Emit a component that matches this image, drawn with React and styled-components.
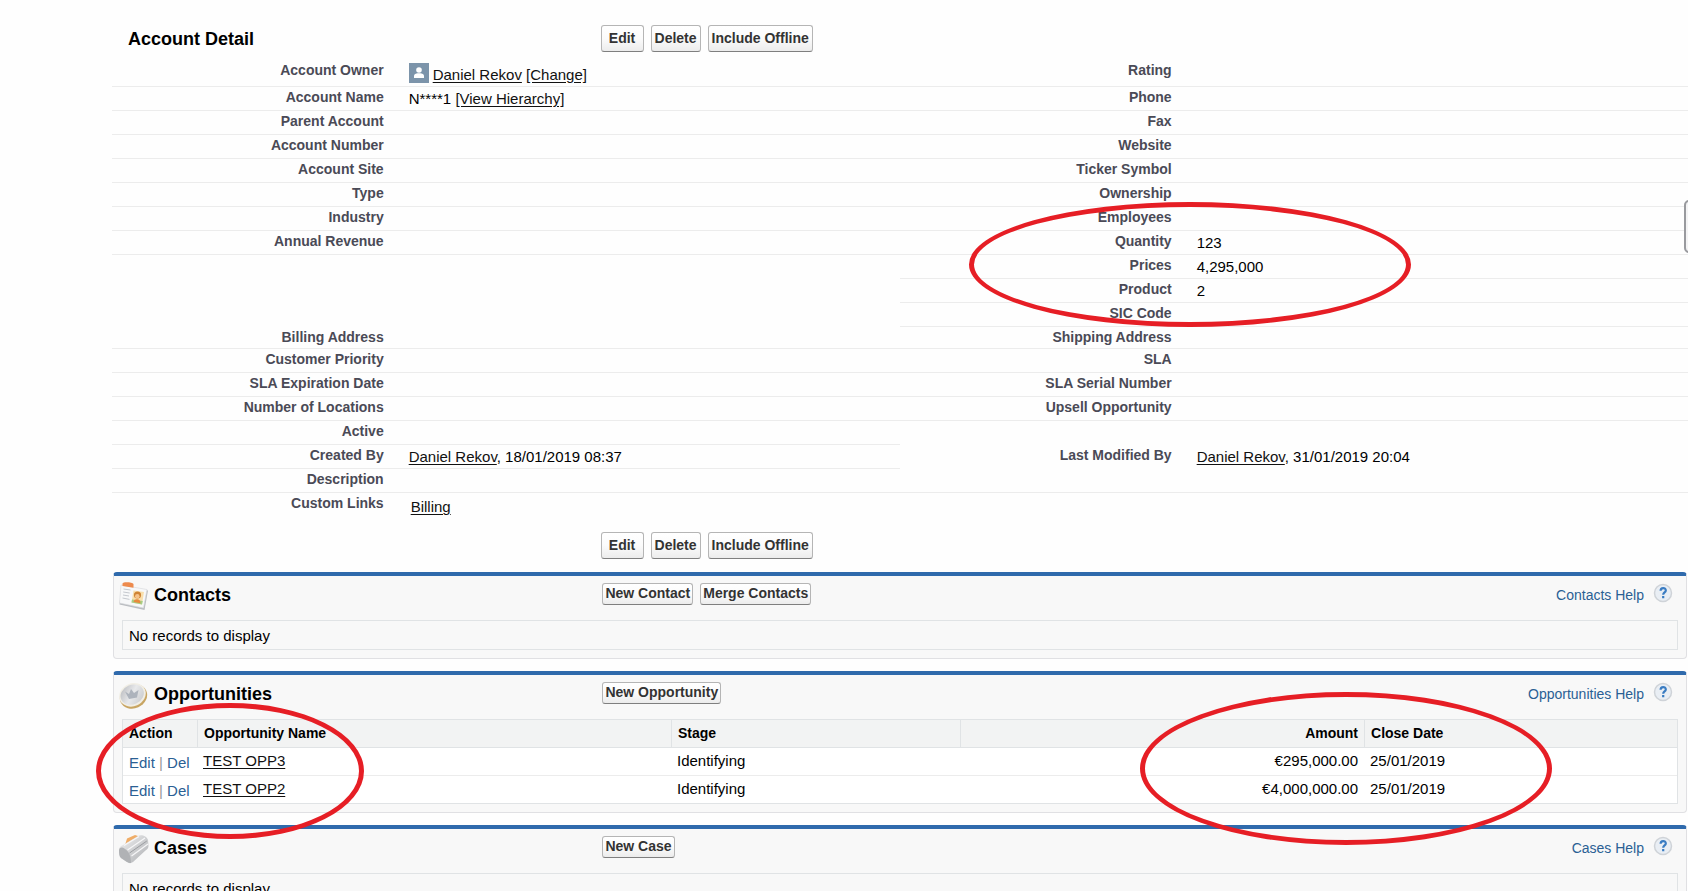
import React from 'react';
import styled, { createGlobalStyle } from 'styled-components';

const GlobalStyle = createGlobalStyle`
  * { box-sizing: border-box; }
  body {
    margin: 0;
    background: #fefefe;
    color: #000;
    font: 15px/20px "Liberation Sans", Arial, sans-serif;
  }
`;

const Page = styled.div`
  position: relative;
  height: 100vh;
  overflow-x: hidden;
  overflow-y: auto;
  scrollbar-width: none;
  padding: 25px 0 0 112px;
`;

const Title = styled.h2`
  margin: 0;
  font-size: 18px;
  line-height: 24px;
`;

const DetailBar = styled.div`
  display: grid;
  grid-template-columns: 31% 1fr;
  align-items: center;
  ${Title} { padding-left: 16px; }
`;

const ButtonGroup = styled.div`
  grid-column: 2;
  display: flex;
  gap: 7px;
`;

const Button = styled.button`
  height: ${(p) => (p.$small ? 22 : 27)}px;
  min-width: 43px;
  padding: ${(p) => (p.$small ? '0 2px 2px' : '0 3px 2px')};
  border: 1px solid #b5b5b5;
  border-bottom-color: #7f7f7f;
  border-radius: 3px;
  background: linear-gradient(#fff, #fbfbfb 50%, #ececec);
  color: #333;
  font: bold 14px/18px "Liberation Sans", Arial, sans-serif;
  white-space: nowrap;
`;

const FieldTable = styled.table`
  width: 100%;
  margin: 8px 0 12px;
  border-spacing: 0;
  table-layout: fixed;
`;

const cellBorder = (p) => (p.$plain ? 'transparent' : '#ececec');

const FieldLabel = styled.th`
  width: 18%;
  height: ${(p) => p.$height || 24}px;
  padding: 0 12px 0 0;
  border-bottom: 1px solid ${cellBorder};
  color: #4a4a56;
  font-size: 14px;
  line-height: 20px;
  text-align: right;
  vertical-align: top;
`;

const FieldValue = styled.td`
  width: 32%;
  padding: ${(p) => p.$top || 2}px 0 0 13px;
  border-bottom: 1px solid ${cellBorder};
  vertical-align: top;
  white-space: nowrap;
`;

const Link = styled.a`
  color: #111;
  text-decoration: underline;
  text-underline-offset: 2px;
`;

const Owner = styled.span`
  display: flex;
  gap: 4px;
`;

const OwnerText = styled.span`
  padding-top: 2px;
`;

const Indent = styled.span`
  padding-left: 2px;
`;

const Panel = styled.section`
  margin: 12px 1px 0;
  padding: 0 8px 8px;
  border: 1px solid #e0e0e3;
  border-top: 4px solid #2f6aac;
  border-radius: 4px;
  background: #f8f8f8;
`;

const PanelStack = styled.div`
  padding-top: 1px;
`;

const PanelHead = styled.div`
  display: grid;
  grid-template-columns: 30.9% 1fr auto;
  align-items: start;
  height: 44px;
  margin: 0 -1px;
  padding-top: 7px;
`;

const PanelName = styled.div`
  display: flex;
  align-items: flex-start;
  gap: 4px;
  margin-left: -3px;
  svg { flex: none; margin-top: -3px; }
`;

const HelpLink = styled.a`
  grid-column: 3;
  display: flex;
  align-items: flex-start;
  gap: 9px;
  padding-right: 6px;
  color: #2a6094;
  font-size: 14px;
  text-decoration: none;
  span { padding-top: 2px; }
`;

const EmptyList = styled.div`
  height: 30px;
  padding: 5px 6px;
  border: 1px solid #e0e3e5;
`;

const ListTable = styled.table`
  width: 100%;
  table-layout: fixed;
  border: 1px solid #e0e3e5;
  border-spacing: 0;
  background: #fff;
`;

const HeadCell = styled.th`
  width: ${(p) => p.$width || 'auto'};
  height: 28px;
  padding: 0 6px 2px;
  border-bottom: 1px solid #e0e3e5;
  border-left: ${(p) => (p.$first ? 0 : 1)}px solid #e0e3e5;
  background: #f2f3f3;
  font-size: 14px;
  text-align: ${(p) => (p.$right ? 'right' : 'left')};
`;

const Cell = styled.td`
  height: ${(p) => (p.$last ? 27 : 28)}px;
  padding: 0 6px 2px;
  border-bottom: ${(p) => (p.$last ? 0 : 1)}px solid #ececec;
  text-align: ${(p) => (p.$right ? 'right' : 'left')};
  white-space: nowrap;
`;

const Actions = styled.div`
  padding-top: 4px;
  color: #999;
  a { color: #2a6094; text-decoration: none; }
`;

const Ring = styled.div`
  position: absolute;
  left: ${(p) => p.$x}px;
  top: ${(p) => p.$y}px;
  width: ${(p) => p.$w}px;
  height: ${(p) => p.$h}px;
  border: 5px solid #e61e25;
  border-radius: 50%;
  pointer-events: none;
`;

const SideHandle = styled.div`
  position: absolute;
  right: -6px;
  top: 200px;
  width: 10px;
  height: 53px;
  border: 2px solid #999a9e;
  border-radius: 5px;
  background: #f4f4f5;
`;

const UserIcon = () => (
  <svg width="20" height="20" viewBox="0 0 20 20" aria-hidden="true">
    <rect width="20" height="20" fill="#7c94aa" />
    <circle cx="10" cy="7" r="2.8" fill="#fff" />
    <path d="M5 15v-2.2c0-1.6 2-2.4 3.6-2.6h2.8c1.6.2 3.6 1 3.6 2.6V15z" fill="#fff" />
  </svg>
);

const ContactsIcon = () => (
  <svg width="32" height="32" viewBox="0 0 32 32" aria-hidden="true">
    <path d="M3.5 6 30 10.5 26.5 30 1.5 24.5z" fill="#b9bcc0" />
    <path d="M3 5 29 9.500 25.500 28 1.500 23z" fill="#f7f8f9" stroke="#d5d7da" strokeWidth=".6" />
    <path d="M4.500 3.500C5 1.500 14.500 2 15.500 4v3.800L4.500 6z" fill="#ed8a4d" />
    <path d="M5.500 9l7 1M5.200 12l6.500 1M5 15l6 1M4.500 18l7 1.400" stroke="#c4c8ce" />
    <path d="M15.500 10.500 26 12l-2 12.500-10.500-2z" fill="#f8dfad" />
    <path d="M14 19.500l10.800 1.500-.8 3.500-10.500-2z" fill="#a5cf86" />
    <circle cx="19.500" cy="15" r="3.600" fill="#cf8435" />
    <circle cx="19.300" cy="16.200" r="2.300" fill="#f6c38a" />
    <path d="M15.500 22c.5-2.500 2-3 3.800-2.800s3.200 1.300 3.200 4z" fill="#e9893c" />
  </svg>
);

const OpportunityIcon = () => (
  <svg width="32" height="32" viewBox="0 0 32 32" aria-hidden="true">
    <defs>
      <linearGradient id="coin" x1="0" y1="0" x2="1" y2="1">
        <stop offset="0" stopColor="#b4b6ba" />
        <stop offset=".5" stopColor="#e8e9eb" />
        <stop offset="1" stopColor="#c3c5c8" />
      </linearGradient>
    </defs>
    <ellipse cx="15.500" cy="17.500" rx="14" ry="11.800" fill="#c8a562" transform="rotate(-24 15.500 17.500)" />
    <ellipse cx="14.500" cy="15.800" rx="13.600" ry="11.400" fill="#f1eee5" transform="rotate(-24 14.500 15.800)" />
    <ellipse cx="14.200" cy="15.600" rx="12" ry="9.800" fill="url(#coin)" transform="rotate(-24 14.200 15.600)" />
    <path d="M7 12.500l4 2.500 2-5 3 4 4.500-3-1.500 7.500-8 1.500z" fill="#adb3bc" />
  </svg>
);

const CaseIcon = () => (
  <svg width="32" height="32" viewBox="0 0 32 32" aria-hidden="true">
    <defs>
      <linearGradient id="case" x1="0" y1="0" x2="1" y2="1">
        <stop offset="0" stopColor="#f4f4f5" />
        <stop offset=".5" stopColor="#cfd0d2" />
        <stop offset="1" stopColor="#aeb0b3" />
      </linearGradient>
    </defs>
    <path d="M7 12 9 5.500 17 2l6 2-6 8z" fill="#f0ad68" />
    <path d="M1 17C1 14 3 13 5 12L20 3c3-2 9 0 10 4l.5 6c0 2-1 3-3 4.500L15 29c-2 1.500-4 1.500-6 0l-6-4c-2-1.500-2-5-2-8z" fill="url(#case)" />
    <path d="M1 17c1-3 3-3 6-1 4 2.500 6 7 6 14-1.500 0-3-.5-4-1l-6-4c-2-1.500-2-5-2-8z" fill="#b0b2b5" />
    <path d="M6 12.500 21 3.500M9.500 17 27 5M13.500 23 30 11" stroke="#f7f7f8" strokeWidth="1.200" fill="none" />
    <path d="M11.500 20 28.800 8" stroke="#9b9da1" fill="none" />
  </svg>
);

const HelpIcon = () => (
  <svg width="20" height="20" viewBox="0 0 20 20" aria-hidden="true">
    <circle cx="10" cy="10" r="8.500" fill="#e9eef4" stroke="#cfd3d8" strokeWidth="1.500" />
    <path d="M7.600 7.800c0-3.500 5.200-3.500 5.200-.4 0 2-2.600 2-2.600 4.300M10.200 13v2.200" stroke="#3a7cc2" strokeWidth="2.200" fill="none" />
  </svg>
);

const person = (rest) => (<><Link href="#user">Daniel Rekov</Link>{rest}</>);

const fields = [
  {
    left: 'Account Owner', right: 'Rating', height: 27, top: 3,
    value: (
      <Owner>
        <UserIcon />
        <OwnerText>{person(' ')}<Link href="#change">[Change]</Link></OwnerText>
      </Owner>
    ),
  },
  { left: 'Account Name', right: 'Phone', value: <>N****1 <Link href="#hierarchy">[View Hierarchy]</Link></> },
  { left: 'Parent Account', right: 'Fax' },
  { left: 'Account Number', right: 'Website' },
  { left: 'Account Site', right: 'Ticker Symbol' },
  { left: 'Type', right: 'Ownership' },
  { left: 'Industry', right: 'Employees' },
  { left: 'Annual Revenue', right: 'Quantity', rightValue: '123' },
  { right: 'Prices', rightValue: '4,295,000', leftPlain: true },
  { right: 'Product', rightValue: '2', leftPlain: true },
  { right: 'SIC Code', leftPlain: true },
  { left: 'Billing Address', right: 'Shipping Address', height: 22 },
  { left: 'Customer Priority', right: 'SLA' },
  { left: 'SLA Expiration Date', right: 'SLA Serial Number' },
  { left: 'Number of Locations', right: 'Upsell Opportunity' },
  { left: 'Active', rightPlain: true },
  {
    left: 'Created By', value: person(', 18/01/2019 08:37'),
    right: 'Last Modified By', rightValue: person(', 31/01/2019 20:04'), rightPlain: true,
  },
  { left: 'Description' },
  {
    left: 'Custom Links', value: <Indent><Link href="#billing">Billing</Link></Indent>,
    height: 27, top: 4, leftPlain: true, rightPlain: true,
  },
];

const opportunities = [
  { name: 'TEST OPP3', amount: '€295,000.00' },
  { name: 'TEST OPP2', amount: '€4,000,000.00' },
];

const RecordButtons = () => (
  <ButtonGroup>
    <Button type="button">Edit</Button>
    <Button type="button">Delete</Button>
    <Button type="button">Include Offline</Button>
  </ButtonGroup>
);

function RelatedList({ title, icon, buttons, children }) {
  return (
    <Panel>
      <PanelHead>
        <PanelName>{icon}<Title as="h3">{title}</Title></PanelName>
        <ButtonGroup>
          {buttons.map((b) => <Button $small type="button" key={b}>{b}</Button>)}
        </ButtonGroup>
        <HelpLink href="#help"><span>{title} Help</span><HelpIcon /></HelpLink>
      </PanelHead>
      {children}
    </Panel>
  );
}

export default function App() {
  return (
    <Page>
      <GlobalStyle />
      <DetailBar>
        <Title>Account Detail</Title>
        <RecordButtons />
      </DetailBar>
      <FieldTable>
        <tbody>
          {fields.map((f, i) => (
            <tr key={i}>
              <FieldLabel scope="row" $height={f.height} $plain={f.leftPlain}>{f.left}</FieldLabel>
              <FieldValue $top={f.top} $plain={f.leftPlain}>{f.value}</FieldValue>
              <FieldLabel scope="row" $height={f.height} $plain={f.rightPlain}>{f.right}</FieldLabel>
              <FieldValue $plain={f.rightPlain}>{f.rightValue}</FieldValue>
            </tr>
          ))}
        </tbody>
      </FieldTable>
      <DetailBar><RecordButtons /></DetailBar>

      <PanelStack>
        <RelatedList title="Contacts" icon={<ContactsIcon />} buttons={['New Contact', 'Merge Contacts']}>
          <EmptyList>No records to display</EmptyList>
        </RelatedList>
        <RelatedList title="Opportunities" icon={<OpportunityIcon />} buttons={['New Opportunity']}>
          <ListTable>
            <thead>
              <tr>
                <HeadCell $first $width="74px">Action</HeadCell>
                <HeadCell $width="30.5%">Opportunity Name</HeadCell>
                <HeadCell $width="18.6%">Stage</HeadCell>
                <HeadCell $width="26%" $right>Amount</HeadCell>
                <HeadCell>Close Date</HeadCell>
              </tr>
            </thead>
            <tbody>
              {opportunities.map((o, i) => {
                const last = i === opportunities.length - 1;
                return (
                  <tr key={o.name}>
                    <Cell $last={last}><Actions><a href="#edit">Edit</a> | <a href="#del">Del</a></Actions></Cell>
                    <Cell $last={last}><Link href="#opportunity">{o.name}</Link></Cell>
                    <Cell $last={last}>Identifying</Cell>
                    <Cell $last={last} $right>{o.amount}</Cell>
                    <Cell $last={last}>25/01/2019</Cell>
                  </tr>
                );
              })}
            </tbody>
          </ListTable>
        </RelatedList>
        <RelatedList title="Cases" icon={<CaseIcon />} buttons={['New Case']}>
          <EmptyList>No records to display</EmptyList>
        </RelatedList>
      </PanelStack>

      <SideHandle />
      <Ring $x={969} $y={202} $w={442} $h={125} />
      <Ring $x={96} $y={703} $w={268} $h={136} />
      <Ring $x={1140} $y={692} $w={412} $h={153} />
    </Page>
  );
}
